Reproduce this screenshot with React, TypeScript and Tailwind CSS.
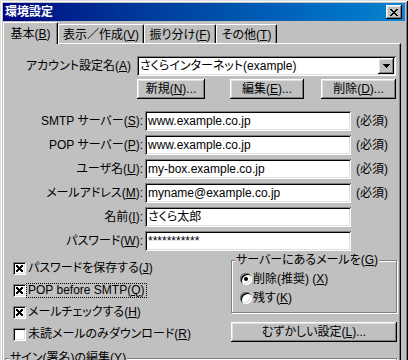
import React from "react";

const raised =
  "shadow-[inset_-1px_-1px_#000,inset_1px_1px_#fff,inset_-2px_-2px_#808080,inset_2px_2px_#dfdfdf]";
const sunken =
  "shadow-[inset_1px_1px_#808080,inset_-1px_-1px_#fff,inset_2px_2px_#000,inset_-2px_-2px_#dfdfdf]";

const K = ({ c }: { c: string }) => (
  <>
    (<span className="underline underline-offset-[1px]">{c}</span>)
  </>
);

function Check({ on }: { on?: boolean }) {
  return (
    <span className={`w-[13px] h-[13px] bg-white ${sunken} flex items-center justify-center shrink-0`}>
      {on && (
        <svg width="7" height="7" viewBox="0 0 7 7" shapeRendering="crispEdges">
          <path
            d="M0 0h2v1H0zM5 0h2v1H5zM0 1h3v1H0zM4 1h3v1H4zM1 2h5v1H1zM2 3h3v1H2zM1 4h5v1H1zM0 5h3v1H0zM4 5h3v1H4zM0 6h2v1H0zM5 6h2v1H5z"
            fill="#000"
          />
        </svg>
      )}
    </span>
  );
}

function Radio({ on }: { on?: boolean }) {
  return (
    <span className="w-[12px] h-[12px] rounded-full bg-white shadow-[inset_1px_1px_#808080,inset_-1px_-1px_#fff,inset_2px_2px_#000,inset_-2px_-2px_#dfdfdf] flex items-center justify-center shrink-0">
      {on && <span className="w-[4px] h-[4px] rounded-full bg-black" />}
    </span>
  );
}

function Field({
  label,
  value,
  req,
}: {
  label: React.ReactNode;
  value: string;
  req?: boolean;
}) {
  return (
    <div className="flex items-center h-[20px]">
      <div className="w-[141px] text-right pr-[2px] whitespace-nowrap">{label}</div>
      <div className={`w-[206px] h-[20px] bg-white ${sunken} pl-[3px] flex items-center whitespace-nowrap overflow-hidden`}>
        {value}
      </div>
      {req && <div className="ml-[5px] whitespace-nowrap">(必須)</div>}
    </div>
  );
}

function Btn({ w, children }: { w: string; children: React.ReactNode }) {
  return (
    <div className={`${w} h-[20px] bg-[#c0c0c0] ${raised} flex items-center justify-center whitespace-nowrap`}>
      {children}
    </div>
  );
}

export default function App() {
  return (
    <div className="w-[408px] h-[360px] overflow-hidden bg-[#c0c0c0]">
      <div className="w-[408px] h-[420px] bg-[#c0c0c0] p-[3px] text-[12px] leading-[14px] text-black font-['Liberation_Sans','Noto_Sans_CJK_JP',sans-serif] [font-feature-settings:'palt'] shadow-[inset_1px_1px_#dfdfdf,inset_-1px_-1px_#000,inset_2px_2px_#fff,inset_-2px_-2px_#808080]">
        {/* title bar */}
        <div className="h-[18px] flex items-center justify-between pl-[2px] pr-[3px] bg-linear-to-r from-[#000080] to-[#1084d0]">
          <span className="text-white font-bold text-[12px] leading-[14px]">環境設定</span>
          <div className={`w-[16px] h-[14px] bg-[#c0c0c0] ${raised} flex items-center justify-center`}>
            <svg width="8" height="7" viewBox="0 0 8 7" shapeRendering="crispEdges">
              <path
                d="M0 0h2v1H0zM6 0h2v1H6zM1 1h2v1H1zM5 1h2v1H5zM2 2h4v1H2zM3 3h2v1H3zM2 4h4v1H2zM1 5h2v1H1zM5 5h2v1H5zM0 6h2v1H0zM6 6h2v1H6z"
                fill="#000"
              />
            </svg>
          </div>
        </div>

        {/* tabs */}
        <div className="flex items-end h-[22px]">
          <div className="relative z-10 -mb-[1px] h-[22px] w-[55px] bg-[#c0c0c0] border-l border-t border-white border-r border-r-black rounded-t-[2px] shadow-[inset_-1px_0_#808080] flex justify-center pt-[4px] whitespace-nowrap">
            基本<K c="B" />
          </div>
          <div className="h-[19px] w-[86px] border-t border-l border-white border-r border-r-black rounded-t-[2px] shadow-[inset_-1px_0_#808080] flex justify-center pt-[3px] whitespace-nowrap">
            表示／作成<K c="V" />
          </div>
          <div className="h-[19px] w-[72px] border-t border-l border-white border-r border-r-black rounded-t-[2px] shadow-[inset_-1px_0_#808080] flex justify-center pt-[3px] whitespace-nowrap">
            振り分け<K c="F" />
          </div>
          <div className="h-[19px] w-[61px] border-t border-l border-white border-r border-r-black rounded-t-[2px] shadow-[inset_-1px_0_#808080] flex justify-center pt-[3px] whitespace-nowrap">
            その他<K c="T" />
          </div>
        </div>

        {/* panel */}
        <div className="mr-[4px] h-[360px] border-t border-l border-white border-r border-r-black shadow-[inset_-1px_0_#808080] flex flex-col">
          {/* account */}
          <div className="mt-[12px] flex items-center h-[20px]">
            <div className="w-[133px] text-right pr-[6px] whitespace-nowrap">
              アカウント設定名<K c="A" />
            </div>
            <div className={`w-[259px] h-[20px] bg-white ${sunken} pl-[3px] pr-[2px] flex items-center justify-between`}>
              <span className="whitespace-nowrap">さくらインターネット(example)</span>
              <div className={`w-[16px] h-[16px] bg-[#c0c0c0] ${raised} flex items-center justify-center`}>
                <svg width="7" height="4" viewBox="0 0 7 4" shapeRendering="crispEdges">
                  <path d="M0 0h7v1H0zM1 1h5v1H1zM2 2h3v1H2zM3 3h1v1H3z" fill="#000" />
                </svg>
              </div>
            </div>
          </div>

          {/* buttons */}
          <div className="mt-[3px] flex h-[20px]">
            <div className="ml-[133px]">
              <Btn w="w-[68px]">
                新規<K c="N" />...
              </Btn>
            </div>
            <div className="ml-[25px]">
              <Btn w="w-[74px]">
                編集<K c="E" />...
              </Btn>
            </div>
            <div className="ml-[17px]">
              <Btn w="w-[75px]">
                削除<K c="D" />...
              </Btn>
            </div>
          </div>

          {/* fields */}
          <div className="mt-[12px] flex flex-col gap-[4px]">
            <Field label={<>SMTP サーバー<K c="S" />:</>} value="www.example.co.jp" req />
            <Field label={<>POP サーバー<K c="P" />:</>} value="www.example.co.jp" req />
            <Field label={<>ユーザ名<K c="U" />:</>} value="my-box.example.co.jp" req />
            <Field label={<>メールアドレス<K c="M" />:</>} value="myname@example.co.jp" req />
            <Field label={<>名前<K c="I" />:</>} value="さくら太郎" />
            <Field label={<>パスワード<K c="W" />:</>} value="***********" />
          </div>

          {/* bottom section */}
          <div className="flex">
            <div className="w-[227px] mt-[7px] flex flex-col gap-[2px]">
              <div className="h-[20px] flex items-center pl-[9px]">
                <Check on />
                <span className="px-[1px] border border-transparent whitespace-nowrap">
                  パスワードを保存する<K c="J" />
                </span>
              </div>
              <div className="h-[20px] flex items-center pl-[9px]">
                <Check on />
                <span className="px-[1px] h-[15px] leading-[13px] border border-dotted border-black whitespace-nowrap">
                  POP before SMTP<K c="Q" />
                </span>
              </div>
              <div className="h-[20px] flex items-center pl-[9px]">
                <Check on />
                <span className="px-[1px] border border-transparent whitespace-nowrap">
                  メールチェックする<K c="H" />
                </span>
              </div>
              <div className="h-[20px] flex items-center pl-[9px]">
                <Check />
                <span className="px-[1px] border border-transparent whitespace-nowrap">
                  未読メールのみダウンロード<K c="R" />
                </span>
              </div>
            </div>

            <div className="w-[166px] mt-[2px] flex flex-col">
              <fieldset className="border border-[#808080] shadow-[inset_1px_1px_#fff,1px_1px_0_#fff] pb-[6px]">
                <legend className="ml-[3px] px-[1px] bg-[#c0c0c0] leading-[14px] whitespace-nowrap">
                  サーバーにあるメールを<K c="G" />
                </legend>
                <div className="mt-[4px] h-[16px] flex items-center pl-[8px]">
                  <Radio on />
                  <span className="ml-[1px] whitespace-nowrap">
                    削除(推奨) <K c="X" />
                  </span>
                </div>
                <div className="mt-[3px] h-[16px] flex items-center pl-[8px]">
                  <Radio />
                  <span className="ml-[1px] whitespace-nowrap">
                    残す<K c="K" />
                  </span>
                </div>
              </fieldset>
              <div className="mt-[9px]">
                <Btn w="w-[166px]">
                  むずかしい設定<K c="L" />...
                </Btn>
              </div>
            </div>
          </div>

          <fieldset className="mt-[7px] ml-[1px] mr-[3px] h-[40px] border border-[#808080] shadow-[inset_1px_1px_#fff,1px_1px_0_#fff]">
            <legend className="ml-[3px] px-[1px] bg-[#c0c0c0] leading-[14px] whitespace-nowrap">
              サイン(署名)の編集<K c="Y" />
            </legend>
          </fieldset>
        </div>
      </div>
    </div>
  );
}
